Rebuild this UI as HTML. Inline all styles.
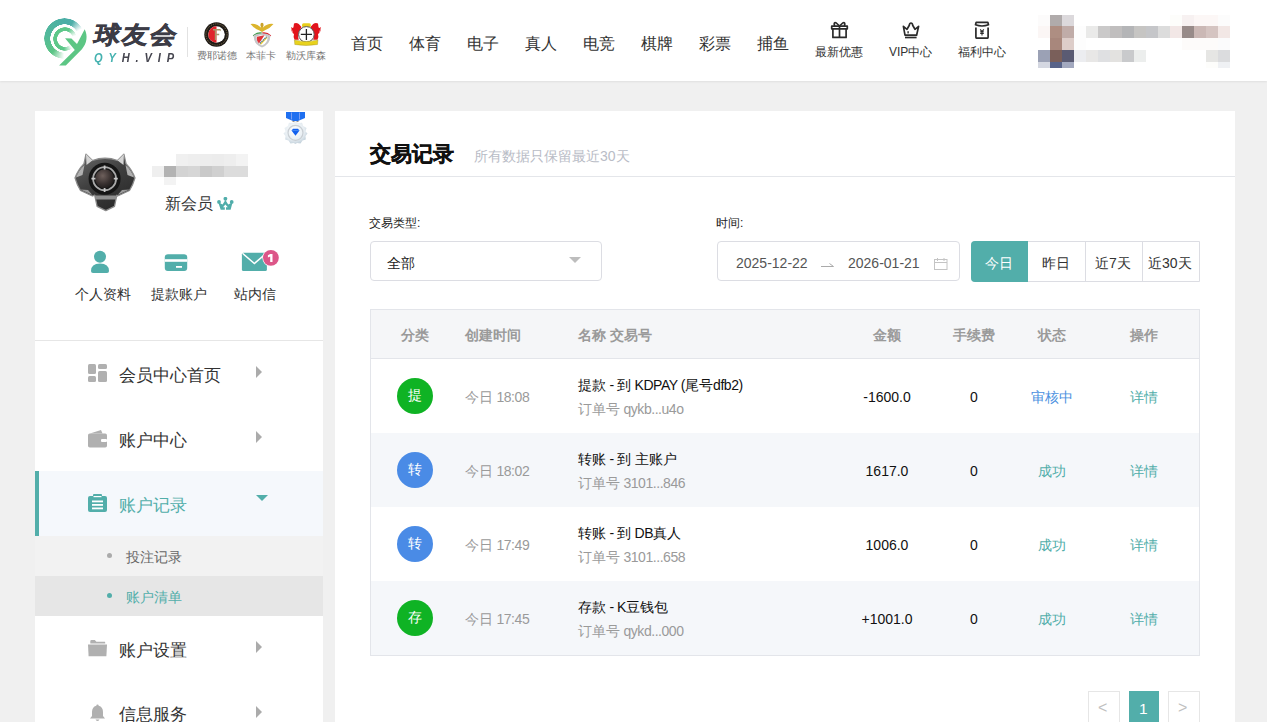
<!DOCTYPE html>
<html><head><meta charset="utf-8"><title>交易记录</title>
<style>
*{margin:0;padding:0;box-sizing:border-box}
html,body{width:1267px;height:722px;overflow:hidden;background:#f0f0f0;font-family:"Liberation Sans",sans-serif;color:#333}
body{position:relative}
.a{position:absolute;white-space:nowrap;line-height:1}
.th{font-size:14px;font-weight:bold;color:#9a9a9a}
.c{transform:translateX(-50%)}
.mz{position:absolute;width:12px;height:12px}
</style></head><body>

<!-- HEADER -->
<div class="a" style="left:0;top:0;width:1267px;height:81px;background:#fff;box-shadow:0 1px 2px rgba(0,0,0,.07)"></div>

<!-- logo mark -->
<div class="a" style="left:44.1px;top:18.1px;width:41.2px;height:41.2px;border-radius:50%;background:conic-gradient(from 181deg, rgba(92,197,133,0) 0deg, #5cc585 40deg, #52b99a 100deg, #4aaea6 180deg, #4caea8 205deg, rgba(76,174,168,0) 240deg, rgba(76,174,168,0) 360deg);-webkit-mask-image:radial-gradient(circle closest-side, transparent 68.5%, #000 70%, #000 98%, transparent 100%)"></div>
<div class="a" style="left:52.7px;top:26.7px;width:24px;height:24px;border-radius:50%;background:conic-gradient(from 142deg, rgba(94,200,138,0) 0deg, #5ec88a 45deg, #5ec88a 240deg, rgba(94,200,138,0) 291deg, rgba(94,200,138,0) 360deg);-webkit-mask-image:radial-gradient(circle closest-side, transparent 64%, #000 67%, #000 97%, transparent 100%)"></div>
<svg class="a" style="left:40px;top:14px" width="52" height="54" viewBox="0 0 52 54">
  <path d="M25.06 24.3 L31.4 24.5 L37 29.9 L44.7 15.3 C47.9 21.7 47.1 29.2 41.9 35.2 L25.8 51.6 L19.1 51.6 L34.8 35.9 Z" fill="#5cc684"/>
</svg>
<div class="a" id="logoT" style="left:97px;top:23px;font-size:26px;font-weight:bold;color:#3c3c46;transform:skewX(-12deg) scaleY(0.92);transform-origin:0 0;letter-spacing:2.2px;-webkit-text-stroke:0.6px #3c3c46">球友会</div>
<div class="a" id="logoS" style="left:94px;top:51px;font-size:13px;font-weight:bold;font-style:italic;letter-spacing:6.9px;color:#45454f;transform:scaleX(0.85);transform-origin:0 0"><span style="color:#45b2b0">QY</span>H.VIP</div>
<div class="a" style="left:187px;top:27px;width:1px;height:30px;background:#e2e2e2"></div>

<!-- badges -->
<svg class="a" style="left:204px;top:22px" width="25" height="25" viewBox="0 0 25 25">
  <circle cx="12.5" cy="12.5" r="12.2" fill="#1e1a16"/>
  <circle cx="12.5" cy="12.5" r="10.6" fill="none" stroke="#8a7a50" stroke-width="1" stroke-dasharray="1 1.2"/>
  <circle cx="12.5" cy="12.5" r="8.3" fill="#fff"/>
  <path d="M12.5 4.2 A8.3 8.3 0 0 0 12.5 20.8 Z" fill="#e0232b"/>
  <path d="M9 7 H16.5 Q17 8.5 17.2 9.5 L16.2 8.6 H12.2 V11.8 H15.2 V13.3 H12.2 V18 H10.8 V8.6 H9 Z" fill="#a8986a"/>
</svg>
<svg class="a" style="left:249px;top:21px" width="26" height="27" viewBox="0 0 26 27">
  <path d="M1.5 3 Q7 1.8 12 6.5 Q13 3 13 3 Q13 3 14 6.5 Q19 1.8 24.5 3 Q21 7.5 15.5 9.5 L13 11 L10.5 9.5 Q5 7.5 1.5 3Z" fill="#dcb52e"/>
  <ellipse cx="13" cy="4" rx="1.6" ry="2.2" fill="#caa22a"/>
  <path d="M3.8 14.5 Q8 10.5 13 11.5 L12.5 13 Q8 12.5 4.5 15.2 Z" fill="#3a9a48"/>
  <path d="M22.2 14.5 Q18 10.5 13 11.5 L13.5 13 Q18 12.5 21.5 15.2 Z" fill="#d9232a"/>
  <path d="M4.8 14.2 Q13 10.5 21.2 14.2 Q22 23 13 26.5 Q4 23 4.8 14.2Z" fill="#c6c6c8"/>
  <path d="M7.5 15.5 Q13 13.2 18.5 15.5 Q19 22 13 24.5 Q7 22 7.5 15.5Z" fill="#fff"/>
  <path d="M8 15.8 L15.5 14.3 L10 22.5 Q7.2 20 8 15.8Z" fill="#e0343a"/>
  <path d="M10.5 22.5 L17.5 15.5 L18.5 16.8 L12 23.8Z" fill="#f3d23a"/>
  <path d="M11 22.3 L17.6 15.8" stroke="#2c6fc0" stroke-width="1.3" stroke-dasharray="1.3 .8"/>
</svg>
<svg class="a" style="left:286px;top:18px" width="40" height="32" viewBox="0 0 40 32">
  <path d="M8 5.5 Q10.5 4.5 12.8 6 L15.5 9 L13 14 L12 19 L12.8 21.7 H8.5 Q7 19 8 16 Q6 15 6.2 12 Q5.5 16 5.5 11 Q5 9 5.5 9 Q7 11 7.5 9 Z" fill="#e2141c"/>
  <path d="M32 5.5 Q29.5 4.5 27.2 6 L24.5 9 L27 14 L28 19 L27.2 21.7 H31.5 Q33 19 32 16 Q34 15 33.8 12 Q34.5 16 34.5 11 Q35 9 34.5 9 Q33 11 32.5 9 Z" fill="#e2141c"/>
  <rect x="16" y="5.3" width="8.8" height="4" rx="1.5" fill="#e8cf1c"/>
  <circle cx="20.4" cy="16.4" r="7.8" fill="#fff" stroke="#555" stroke-width="1"/>
  <path d="M20.4 11 V22 M14.8 16.4 H26" stroke="#222" stroke-width="1.3"/>
  <path d="M8.4 22 Q20 25 31.9 22 L31.5 26.5 Q20 28.5 8.8 26.5 Z" fill="#e8d21c" stroke="#9a8a20" stroke-width=".4"/>
</svg>
<div class="a" style="left:197px;top:51px;font-size:10px;color:#777">费耶诺德</div>
<div class="a" style="left:246px;top:51px;font-size:10px;color:#777">本菲卡</div>
<div class="a" style="left:286px;top:51px;font-size:10px;color:#777">勒沃库森</div>

<!-- nav -->
<div class="a nav" style="left:351px;top:35.5px;font-size:16px;color:#333">首页</div>
<div class="a nav" style="left:409px;top:35.5px;font-size:16px;color:#333">体育</div>
<div class="a nav" style="left:467px;top:35.5px;font-size:16px;color:#333">电子</div>
<div class="a nav" style="left:525px;top:35.5px;font-size:16px;color:#333">真人</div>
<div class="a nav" style="left:583px;top:35.5px;font-size:16px;color:#333">电竞</div>
<div class="a nav" style="left:641px;top:35.5px;font-size:16px;color:#333">棋牌</div>
<div class="a nav" style="left:699px;top:35.5px;font-size:16px;color:#333">彩票</div>
<div class="a nav" style="left:757px;top:35.5px;font-size:16px;color:#333">捕鱼</div>

<!-- header icons -->
<svg class="a" style="left:830px;top:21px" width="19" height="18" viewBox="0 0 19 18">
  <g fill="none" stroke="#2b2b2b" stroke-width="1.7" stroke-linejoin="round">
    <rect x="1.7" y="5.2" width="15.6" height="2.6"/>
    <path d="M2.9 7.8 V16.4 H16.1 V7.8"/>
    <path d="M9.5 5.2 V16.4"/>
    <path d="M9.5 5 L6.3 2 Q4.2 1 4.2 3 L4.6 5 M9.5 5 L12.7 2 Q14.8 1 14.8 3 L14.4 5"/>
  </g>
</svg>
<svg class="a" style="left:901px;top:21px" width="19" height="18" viewBox="0 0 19 18">
  <g fill="none" stroke="#2b2b2b" stroke-width="1.7" stroke-linejoin="round">
    <path d="M2.4 5.4 L6 8.3 L8.2 4.5 Q8.6 2 10 2 Q11.4 2 11.8 4.5 L14 8.3 L17.6 5.4 L15.6 14.2 H4 Z"/>
    <path d="M4 16.5 H15.6"/>
  </g>
  <rect x="6.4" y="10.2" width="1.4" height="2.2" fill="#2b2b2b"/>
</svg>
<svg class="a" style="left:974px;top:21px" width="16" height="18" viewBox="0 0 16 18">
  <g fill="none" stroke="#2b2b2b" stroke-width="1.7" stroke-linejoin="round">
    <path d="M2.2 1.3 H13.8 L14.5 3.8 Q8 6.2 1.5 3.8 Z"/>
    <path d="M1.9 6.4 V16.2 Q1.9 17.2 2.9 17.2 H13.1 Q14.1 17.2 14.1 16.2 V6.4"/>
  </g>
  <path d="M6.2 8.4 L8 10.6 L9.8 8.4 M8 10.6 V14.4 M6.2 10.9 H9.8 M6.2 12.5 H9.8" fill="none" stroke="#2b2b2b" stroke-width="1.1"/>
</svg>
<div class="a" style="left:815px;top:45.7px;font-size:12px;color:#333">最新优惠</div>
<div class="a" style="left:889px;top:45.7px;font-size:12px;color:#333">VIP中心</div>
<div class="a" style="left:958px;top:45.7px;font-size:12px;color:#333">福利中心</div>

<!-- MOSAIC_HDR -->
<div class="mz" style="left:1038px;top:14.8px;height:11.4px;background:#fcfbfb"></div>
<div class="mz" style="left:1050px;top:14.8px;height:11.4px;background:#b0abab"></div>
<div class="mz" style="left:1062px;top:14.8px;height:11.4px;background:#dcd9dc"></div>
<div class="mz" style="left:1170px;top:14.8px;height:11.4px;background:#fdfdfb"></div>
<div class="mz" style="left:1182px;top:14.8px;height:11.4px;background:#f7f1f1"></div>
<div class="mz" style="left:1194px;top:14.8px;height:11.4px;background:#fcf7f6"></div>
<div class="mz" style="left:1206px;top:14.8px;height:11.4px;background:#fcf7f6"></div>
<div class="mz" style="left:1218px;top:14.8px;height:11.4px;background:#fcfcfc"></div>
<div class="mz" style="left:1038px;top:26.2px;height:12px;background:#fbf6f5"></div>
<div class="mz" style="left:1050px;top:26.2px;height:12px;background:#ae8e82"></div>
<div class="mz" style="left:1062px;top:26.2px;height:12px;background:#c0aca8"></div>
<div class="mz" style="left:1074px;top:26.2px;height:12px;background:#fdfdfd"></div>
<div class="mz" style="left:1086px;top:26.2px;height:12px;background:#eaeae9"></div>
<div class="mz" style="left:1098px;top:26.2px;height:12px;background:#cac9c9"></div>
<div class="mz" style="left:1110px;top:26.2px;height:12px;background:#c0bebe"></div>
<div class="mz" style="left:1122px;top:26.2px;height:12px;background:#b4b5b7"></div>
<div class="mz" style="left:1134px;top:26.2px;height:12px;background:#c6c5c3"></div>
<div class="mz" style="left:1146px;top:26.2px;height:12px;background:#c5c6c9"></div>
<div class="mz" style="left:1158px;top:26.2px;height:12px;background:#dcdcdc"></div>
<div class="mz" style="left:1170px;top:26.2px;height:12px;background:#f2e7e6"></div>
<div class="mz" style="left:1182px;top:26.2px;height:12px;background:#988b89"></div>
<div class="mz" style="left:1194px;top:26.2px;height:12px;background:#cbb8b5"></div>
<div class="mz" style="left:1206px;top:26.2px;height:12px;background:#d5c4c1"></div>
<div class="mz" style="left:1218px;top:26.2px;height:12px;background:#f2e7e5"></div>
<div class="mz" style="left:1050px;top:38.2px;height:12px;background:#a8877c"></div>
<div class="mz" style="left:1062px;top:38.2px;height:12px;background:#ddcdc9"></div>
<div class="mz" style="left:1074px;top:38.2px;height:12px;background:#fdfdfd"></div>
<div class="mz" style="left:1182px;top:38.2px;height:12px;background:#fdfbfa"></div>
<div class="mz" style="left:1194px;top:38.2px;height:12px;background:#fdfbfa"></div>
<div class="mz" style="left:1206px;top:38.2px;height:12px;background:#fdfbfa"></div>
<div class="mz" style="left:1218px;top:38.2px;height:12px;background:#fbfbfc"></div>
<div class="mz" style="left:1038px;top:50.2px;height:11.8px;background:#9ba1b5"></div>
<div class="mz" style="left:1050px;top:50.2px;height:11.8px;background:#7a5f5a"></div>
<div class="mz" style="left:1062px;top:50.2px;height:11.8px;background:#5a5b73"></div>
<div class="mz" style="left:1074px;top:50.2px;height:11.8px;background:#ecedf0"></div>
<div class="mz" style="left:1086px;top:50.2px;height:11.8px;background:#e8e7e6"></div>
<div class="mz" style="left:1098px;top:50.2px;height:11.8px;background:#dfe0e2"></div>
<div class="mz" style="left:1110px;top:50.2px;height:11.8px;background:#e3e2e0"></div>
<div class="mz" style="left:1122px;top:50.2px;height:11.8px;background:#c9cacc"></div>
<div class="mz" style="left:1134px;top:50.2px;height:11.8px;background:#eceeed"></div>
<div class="mz" style="left:1206px;top:50.2px;height:11.8px;background:#e6e6e4"></div>
<div class="mz" style="left:1218px;top:50.2px;height:11.8px;background:#dbdcde"></div>
<div class="mz" style="left:1038px;top:62px;height:5.8px;background:#d4d7e1"></div>
<div class="mz" style="left:1050px;top:62px;height:5.8px;background:#586389"></div>
<div class="mz" style="left:1062px;top:62px;height:5.8px;background:#a3a9bf"></div>
<div class="mz" style="left:1206px;top:62px;height:5.8px;background:#fdfdfb"></div>
<div class="mz" style="left:1218px;top:62px;height:5.8px;background:#eff1f4"></div>


<!-- SIDEBAR -->
<div class="a" style="left:35px;top:111px;width:288px;height:611px;background:#fff"></div>


<!-- medal -->
<svg class="a" style="left:282px;top:111px" width="27" height="34" viewBox="0 0 27 34">
  <defs><radialGradient id="mg" cx=".45" cy=".4" r=".6"><stop offset="0" stop-color="#ffffff"/><stop offset=".7" stop-color="#e6edf2"/><stop offset="1" stop-color="#c4d2dc"/></radialGradient></defs>
  <path d="M4 1 H23 V7 L16 10 H11 L4 7 Z" fill="#1f6ff0"/>
  <path d="M9.5 1.5 V8.5 M17.5 1.5 V8.5" stroke="#8fa9f5" stroke-width=".8"/>
  <path d="M10.5 9.5 L13.5 11 L16.5 9.5 V11 H10.5Z" fill="#9a8f80"/>
  <path d="M13.5 10.5 L16.5 12 L20 11.8 L21.2 15 L24.5 17 L23.5 20.5 L25.5 22.5 L23.5 25 L23.8 28.5 L20.5 29.5 L18.5 32.5 L15 32 L13.5 33 L11.5 32 L8.5 32.5 L6.5 29.5 L3.2 28.5 L3.5 25 L1.5 22.5 L3.5 20.5 L2.5 17 L5.8 15 L7 11.8 L10.5 12 Z" fill="url(#mg)"/>
  <circle cx="13.5" cy="21.8" r="7.5" fill="none" stroke="#c9cfd4" stroke-width="1.2"/>
  <path d="M9.5 19.5 L11 17.8 H16 L17.5 19.5 L13.5 24.8 Z" fill="#1160ee"/>
  <path d="M10.2 19.5 H16.8" stroke="#5c9af6" stroke-width=".6"/>
</svg>
<!-- avatar badge -->
<svg class="a" style="left:74px;top:153px" width="62" height="59" viewBox="0 0 62 59">
  <defs>
    <linearGradient id="sh" x1="0" y1="0" x2="0.6" y2="1"><stop offset="0" stop-color="#6a6a6a"/><stop offset=".5" stop-color="#404040"/><stop offset="1" stop-color="#2a2a2a"/></linearGradient>
    <radialGradient id="ball" cx=".4" cy=".35" r=".7"><stop offset="0" stop-color="#6e605c"/><stop offset=".6" stop-color="#3a3231"/><stop offset="1" stop-color="#1d1a1a"/></radialGradient>
  </defs>
  <path d="M12 1.2 L18.4 7.5 Q31 3 43.6 7.5 L49.9 1.2 L52 10.7 Q58 17 61 24.9 Q59 32 55.5 37.5 L43.6 43 L42.8 42.2 L40.5 53.3 L31.8 57.7 L23.1 53.3 L20.7 42.2 L18.4 43 L6.5 37.5 Q3 32 1 24.9 Q4 17 10 10.7 Z" fill="url(#sh)" stroke="#8c8c8c" stroke-width="1.3" stroke-linejoin="round"/>
  <path d="M12 1.2 L18.4 7.5 L12.5 12 Z M49.9 1.2 L43.6 7.5 L49.5 12 Z" fill="#d4d4d4"/>
  <path d="M2 24.5 Q5 17 10.5 12 L8.5 22 Z M60 24.5 Q57 17 51.5 12 L53.5 22 Z" fill="#b0b0b0"/>
  <path d="M6.5 36.5 L18.4 42 L14 37 Z M55.5 36.5 L43.6 42 L48 37Z" fill="#9a9a9a"/>
  <path d="M21 42.5 H42.5 L41.8 46.5 H21.7Z" fill="#909090"/>
  <circle cx="30.6" cy="25.7" r="16" fill="#151515"/>
  <circle cx="30.6" cy="25.7" r="11.5" fill="none" stroke="#a8a8a8" stroke-width="1.8"/>
  <circle cx="30.6" cy="25.7" r="9.5" fill="url(#ball)"/>
  <path d="M30.6 12.5 V16.5 M30.6 35 V39 M17.4 25.7 H21.4 M39.8 25.7 H43.8" stroke="#c8c8c8" stroke-width="1.8"/>
</svg>
<div class="a" style="left:176.1px;top:154px;width:12px;height:11.5px;background:#f0f0f0"></div>
<div class="a" style="left:188.0px;top:154px;width:12px;height:11.5px;background:#eeeeee"></div>
<div class="a" style="left:199.9px;top:154px;width:12px;height:11.5px;background:#ededed"></div>
<div class="a" style="left:211.8px;top:154px;width:12px;height:11.5px;background:#ececec"></div>
<div class="a" style="left:223.7px;top:154px;width:12px;height:11.5px;background:#eeeeee"></div>
<div class="a" style="left:235.6px;top:154px;width:12px;height:11.5px;background:#f3f3f3"></div>
<div class="a" style="left:152.3px;top:165.5px;width:12px;height:11.5px;background:#efefef"></div>
<div class="a" style="left:164.2px;top:165.5px;width:12px;height:11.5px;background:#b3b3b3"></div>
<div class="a" style="left:176.1px;top:165.5px;width:12px;height:11.5px;background:#d3d3d3"></div>
<div class="a" style="left:188.0px;top:165.5px;width:12px;height:11.5px;background:#d6d6d6"></div>
<div class="a" style="left:199.9px;top:165.5px;width:12px;height:11.5px;background:#c9c9c9"></div>
<div class="a" style="left:211.8px;top:165.5px;width:12px;height:11.5px;background:#d0d0d0"></div>
<div class="a" style="left:223.7px;top:165.5px;width:12px;height:11.5px;background:#dcdcdc"></div>
<div class="a" style="left:235.6px;top:165.5px;width:12px;height:11.5px;background:#dcdcdc"></div>
<div class="a" style="left:164.2px;top:177px;width:12px;height:8px;background:#f3f3f3"></div>
<div class="a" style="left:165px;top:196.3px;font-size:16px;color:#333">新会员</div>
<svg class="a" style="left:217px;top:197px" width="17" height="14" viewBox="0 0 17 14">
  <path d="M1.2 5.2 L3.7 12.8 H13.6 L15.6 5.2 L11.2 7.6 L8.4 3 L5.6 7.6 Z" fill="#50adaa"/>
  <circle cx="2" cy="4.9" r="1.9" fill="#50adaa"/><circle cx="14.7" cy="4.9" r="1.9" fill="#50adaa"/><circle cx="8.4" cy="1.8" r="1.9" fill="#50adaa"/>
  <path d="M6 10.3 L8.4 7.4 L10.8 10.3 H9 V12.9 H7.8 V10.3 Z" fill="#fff"/>
</svg>

<!-- three icons -->
<svg class="a" style="left:90px;top:250px" width="20" height="24" viewBox="0 0 20 24">
  <circle cx="10" cy="6.8" r="6" fill="#52aeaa"/>
  <path d="M1 21 Q1 13.5 10 13.5 Q19 13.5 19 21 Q19 23 17 23 H3 Q1 23 1 21Z" fill="#52aeaa"/>
</svg>
<svg class="a" style="left:164px;top:254px" width="24" height="18" viewBox="0 0 24 18">
  <rect x=".8" y=".3" width="22.4" height="16.8" rx="3" fill="#52aeaa"/>
  <rect x=".8" y="5.2" width="22.4" height="2.6" fill="#fff"/>
  <rect x="12" y="12" width="6" height="1.8" fill="#fff"/>
</svg>
<svg class="a" style="left:241px;top:248px" width="40" height="24" viewBox="0 0 40 24">
  <rect x=".9" y="4.8" width="25" height="18.2" rx="1.5" fill="#52aeaa"/>
  <path d="M1.5 5.3 L13.4 15.5 L25.3 5.3" fill="none" stroke="#fff" stroke-width="1.5"/>
  <circle cx="29.9" cy="9.8" r="8.6" fill="#fff"/>
  <circle cx="29.9" cy="9.8" r="7.9" fill="#dc5688"/>
  <path d="M29.2 5.9 H31.5 V14 H29.2 V8.6 L26.9 9.4 V7.3 Z" fill="#fff"/>
</svg>
<div class="a" style="left:74.7px;top:286.5px;font-size:14px;color:#333">个人资料</div>
<div class="a" style="left:150.7px;top:286.5px;font-size:14px;color:#333">提款账户</div>
<div class="a" style="left:233.7px;top:286.5px;font-size:14px;color:#333">站内信</div>
<div class="a" style="left:35px;top:340px;width:288px;height:1px;background:#e6e6e6"></div>

<!-- menu -->
<svg class="a" style="left:88px;top:364px" width="19" height="18" viewBox="0 0 19 18">
  <g fill="#b0b0b0"><rect x="0" y="0" width="8" height="10" rx="1.5"/><rect x="0" y="12" width="8" height="6" rx="1.5"/><rect x="10" y="0" width="9" height="5" rx="1.5"/><rect x="10" y="7" width="9" height="11" rx="1.5"/></g>
</svg>
<div class="a" style="left:118.5px;top:366.7px;font-size:17px;color:#333">会员中心首页</div>
<div class="a" style="left:256px;top:366px;width:0;height:0;border-left:6px solid #ababab;border-top:6px solid transparent;border-bottom:6px solid transparent"></div>

<svg class="a" style="left:88px;top:429px" width="19" height="19" viewBox="0 0 19 19">
  <path d="M2 4.5 L13 1 L14.5 4.5 Z" fill="#b0b0b0"/>
  <rect x="0" y="4.5" width="19" height="14" rx="1.8" fill="#b0b0b0"/>
  <rect x="13" y="10" width="6" height="3" rx="1" fill="#fff"/>
</svg>
<div class="a" style="left:118.5px;top:431.7px;font-size:17px;color:#333">账户中心</div>
<div class="a" style="left:256px;top:431px;width:0;height:0;border-left:6px solid #ababab;border-top:6px solid transparent;border-bottom:6px solid transparent"></div>

<div class="a" style="left:35px;top:471px;width:288px;height:65px;background:#f5f8fc"></div>
<div class="a" style="left:35px;top:471px;width:4px;height:65px;background:#52aeaa"></div>
<svg class="a" style="left:88px;top:494px" width="19" height="18" viewBox="0 0 19 18">
  <rect x="0" y="2" width="19" height="16" rx="2" fill="#52aeaa"/>
  <rect x="5" y="0" width="9" height="4" rx="1" fill="#52aeaa"/>
  <rect x="5.5" y="2" width="8" height="1.2" fill="#fff"/>
  <rect x="4" y="6.5" width="11" height="1.8" fill="#fff"/>
  <rect x="4" y="10" width="11" height="1.8" fill="#fff"/>
  <rect x="4" y="13.5" width="11" height="1.8" fill="#fff"/>
</svg>
<div class="a" style="left:118.5px;top:497px;font-size:17px;color:#52aeaa">账户记录</div>
<div class="a" style="left:256px;top:495px;width:0;height:0;border-top:6.5px solid #52aeaa;border-left:6px solid transparent;border-right:6px solid transparent"></div>

<div class="a" style="left:35px;top:536px;width:288px;height:40px;background:#f2f2f2"></div>
<div class="a" style="left:107px;top:553px;width:5px;height:5px;border-radius:50%;background:#ababab"></div>
<div class="a" style="left:126px;top:549.5px;font-size:14px;color:#666">投注记录</div>
<div class="a" style="left:35px;top:576px;width:288px;height:40px;background:#e6e6e6"></div>
<div class="a" style="left:107px;top:593px;width:5px;height:5px;border-radius:50%;background:#52aeaa"></div>
<div class="a" style="left:126px;top:589.5px;font-size:14px;color:#52aeaa">账户清单</div>

<svg class="a" style="left:88px;top:640px" width="19" height="17" viewBox="0 0 19 17">
  <path d="M2.3 1.2 Q2.3 0 3.5 0 H6.8 L8.4 1.8 H16.8 Q17.2 1.8 17.2 2.4 V3.6 H2.3 Z" fill="#b0b0b0"/>
  <path d="M0 4.6 H19 L18.4 16.2 H0.6 Z" fill="#b0b0b0"/>
</svg>
<div class="a" style="left:118.5px;top:642px;font-size:17px;color:#333">账户设置</div>
<div class="a" style="left:256px;top:641px;width:0;height:0;border-left:6px solid #ababab;border-top:6px solid transparent;border-bottom:6px solid transparent"></div>

<svg class="a" style="left:90px;top:704px" width="15" height="18" viewBox="0 0 15 18">
  <path d="M7.5 0.5 Q8.7 .5 8.7 1.8 Q13 3 13 8 V12 L15 14.5 H0 L2 12 V8 Q2 3 6.3 1.8 Q6.3 .5 7.5 .5Z" fill="#b0b0b0"/>
  <path d="M5.5 15.5 Q7.5 18.5 9.5 15.5Z" fill="#b0b0b0"/>
</svg>
<div class="a" style="left:118.5px;top:706px;font-size:17px;color:#333">信息服务</div>
<div class="a" style="left:256px;top:706px;width:0;height:0;border-left:6px solid #ababab;border-top:6px solid transparent;border-bottom:6px solid transparent"></div>

<!-- MAIN -->
<div class="a" style="left:335px;top:111px;width:900px;height:611px;background:#fff"></div>


<div class="a" style="left:370px;top:143.7px;font-size:20.5px;font-weight:bold;color:#111;-webkit-text-stroke:.4px #111">交易记录</div>
<div class="a" style="left:474px;top:149px;font-size:14px;color:#b9bcc6">所有数据只保留最近30天</div>
<div class="a" style="left:335px;top:176px;width:900px;height:1px;background:#e4e6ea"></div>

<div class="a" style="left:369px;top:217px;font-size:12px;color:#222">交易类型:</div>
<div class="a" style="left:370px;top:241px;width:232px;height:40px;border:1px solid #dcdde3;border-radius:4px;background:#fff"></div>
<div class="a" style="left:387px;top:255.5px;font-size:14px;color:#222">全部</div>
<div class="a" style="left:569px;top:257px;width:0;height:0;border-top:6px solid #bdbdbd;border-left:6px solid transparent;border-right:6px solid transparent"></div>

<div class="a" style="left:716px;top:217px;font-size:12px;color:#222">时间:</div>
<div class="a" style="left:717px;top:241px;width:243px;height:40px;border:1px solid #dcdde3;border-radius:4px;background:#fff"></div>
<div class="a" style="left:736px;top:256px;font-size:14px;color:#555">2025-12-22</div>
<svg class="a" style="left:820px;top:260px" width="15" height="8" viewBox="0 0 15 8"><path d="M1 6.5 H13.5 L9.5 3.5" fill="none" stroke="#aaa" stroke-width="1"/></svg>
<div class="a" style="left:848px;top:256px;font-size:14px;color:#555">2026-01-21</div>
<svg class="a" style="left:934px;top:258px" width="14" height="12" viewBox="0 0 14 12"><g fill="none" stroke="#c4c4c4" stroke-width="1"><rect x=".5" y="1.5" width="12.5" height="10"/><path d="M.5 4.5 H13 M3.5 0 V3 M10 0 V3"/></g></svg>

<div class="a" style="left:971px;top:241px;width:229px;height:41px;border:1px solid #dcdde3;border-radius:4px 0 0 4px;background:#fff"></div>
<div class="a" style="left:971px;top:241px;width:57px;height:41px;border-radius:4px 0 0 4px;background:#52aeaa"></div>
<div class="a" style="left:1085px;top:241px;width:1px;height:41px;background:#dcdde3"></div>
<div class="a" style="left:1142px;top:241px;width:1px;height:41px;background:#dcdde3"></div>
<div class="a" style="left:985px;top:256px;font-size:14px;color:#fff">今日</div>
<div class="a" style="left:1042px;top:256px;font-size:14px;color:#333">昨日</div>
<div class="a" style="left:1095px;top:256px;font-size:14px;color:#333">近7天</div>
<div class="a" style="left:1148px;top:256px;font-size:14px;color:#333">近30天</div>

<!-- table -->
<div class="a" style="left:370px;top:309px;width:830px;height:347px;border:1px solid #e3e5ea;background:#fff"></div>
<div class="a" style="left:371px;top:310px;width:828px;height:48px;background:#f5f6f8"></div>
<div class="a" style="left:371px;top:358px;width:828px;height:1px;background:#e3e5ea"></div>
<div class="a" style="left:371px;top:433px;width:828px;height:74px;background:#f5f7fa"></div>
<div class="a" style="left:371px;top:581px;width:828px;height:74px;background:#f5f7fa"></div>

<div class="a th" style="left:401px;top:328px">分类</div>
<div class="a th" style="left:465px;top:328px">创建时间</div>
<div class="a th" style="left:578px;top:328px">名称 交易号</div>
<div class="a th c" style="left:887px;top:328px">金额</div>
<div class="a th c" style="left:974px;top:328px">手续费</div>
<div class="a th c" style="left:1052px;top:328px">状态</div>
<div class="a th c" style="left:1144px;top:328px">操作</div>

<div class="a" style="left:397px;top:378px;width:36px;height:36px;border-radius:50%;background:#0fb324"></div>
<div class="a" style="left:408.3px;top:388.3px;font-size:14px;color:#fff">提</div>
<div class="a" style="left:465px;top:390px;font-size:14px;color:#9a9a9a">今日<span style="letter-spacing:-0.45px"> 18:08</span></div>
<div class="a" style="left:578px;top:378px;font-size:14px;color:#111">提款<span style="letter-spacing:-0.45px"> - </span>到<span style="letter-spacing:-0.45px"> KDPAY (</span>尾号<span style="letter-spacing:-0.45px">dfb2)</span></div>
<div class="a" style="left:578px;top:402px;font-size:14px;color:#9a9a9a">订单号<span style="letter-spacing:-0.45px"> qykb...u4o</span></div>
<div class="a c" style="left:887px;top:390px;font-size:14px;color:#111">-1600.0</div>
<div class="a c" style="left:974px;top:390px;font-size:14px;color:#111">0</div>
<div class="a c" style="left:1052px;top:390px;font-size:14px;color:#4a8fe0">审核中</div>
<div class="a c" style="left:1144px;top:390px;font-size:14px;color:#52aeaa">详情</div>

<div class="a" style="left:397px;top:452px;width:36px;height:36px;border-radius:50%;background:#4a8be6"></div>
<div class="a" style="left:408.3px;top:462.3px;font-size:14px;color:#fff">转</div>
<div class="a" style="left:465px;top:464px;font-size:14px;color:#9a9a9a">今日<span style="letter-spacing:-0.45px"> 18:02</span></div>
<div class="a" style="left:578px;top:452px;font-size:14px;color:#111">转账<span style="letter-spacing:-0.45px"> - </span>到<span style="letter-spacing:-0.45px"> </span>主账户</div>
<div class="a" style="left:578px;top:476px;font-size:14px;color:#9a9a9a">订单号<span style="letter-spacing:-0.45px"> 3101...846</span></div>
<div class="a c" style="left:887px;top:464px;font-size:14px;color:#111">1617.0</div>
<div class="a c" style="left:974px;top:464px;font-size:14px;color:#111">0</div>
<div class="a c" style="left:1052px;top:464px;font-size:14px;color:#52aeaa">成功</div>
<div class="a c" style="left:1144px;top:464px;font-size:14px;color:#52aeaa">详情</div>

<div class="a" style="left:397px;top:526px;width:36px;height:36px;border-radius:50%;background:#4a8be6"></div>
<div class="a" style="left:408.3px;top:536.3px;font-size:14px;color:#fff">转</div>
<div class="a" style="left:465px;top:538px;font-size:14px;color:#9a9a9a">今日<span style="letter-spacing:-0.45px"> 17:49</span></div>
<div class="a" style="left:578px;top:526px;font-size:14px;color:#111">转账<span style="letter-spacing:-0.45px"> - </span>到<span style="letter-spacing:-0.45px"> DB</span>真人</div>
<div class="a" style="left:578px;top:550px;font-size:14px;color:#9a9a9a">订单号<span style="letter-spacing:-0.45px"> 3101...658</span></div>
<div class="a c" style="left:887px;top:538px;font-size:14px;color:#111">1006.0</div>
<div class="a c" style="left:974px;top:538px;font-size:14px;color:#111">0</div>
<div class="a c" style="left:1052px;top:538px;font-size:14px;color:#52aeaa">成功</div>
<div class="a c" style="left:1144px;top:538px;font-size:14px;color:#52aeaa">详情</div>

<div class="a" style="left:397px;top:600px;width:36px;height:36px;border-radius:50%;background:#0fb324"></div>
<div class="a" style="left:408.3px;top:610.3px;font-size:14px;color:#fff">存</div>
<div class="a" style="left:465px;top:612px;font-size:14px;color:#9a9a9a">今日<span style="letter-spacing:-0.45px"> 17:45</span></div>
<div class="a" style="left:578px;top:600px;font-size:14px;color:#111">存款<span style="letter-spacing:-0.45px"> - K</span>豆钱包</div>
<div class="a" style="left:578px;top:624px;font-size:14px;color:#9a9a9a">订单号<span style="letter-spacing:-0.45px"> qykd...000</span></div>
<div class="a c" style="left:887px;top:612px;font-size:14px;color:#111">+1001.0</div>
<div class="a c" style="left:974px;top:612px;font-size:14px;color:#111">0</div>
<div class="a c" style="left:1052px;top:612px;font-size:14px;color:#52aeaa">成功</div>
<div class="a c" style="left:1144px;top:612px;font-size:14px;color:#52aeaa">详情</div>

<!-- pagination -->
<div class="a" style="left:1088px;top:691px;width:32px;height:40px;border:1px solid #e6e6e6;background:#fff"></div>
<div class="a" style="left:1098px;top:700px;font-size:16px;color:#c0c0c0">&lt;</div>
<div class="a" style="left:1129px;top:691px;width:30px;height:40px;background:#52aeaa"></div>
<div class="a" style="left:1139px;top:701px;font-size:15.5px;color:#fff">1</div>
<div class="a" style="left:1168px;top:691px;width:32px;height:40px;border:1px solid #e6e6e6;background:#fff"></div>
<div class="a" style="left:1178px;top:700px;font-size:16px;color:#c0c0c0">&gt;</div>

</body></html>
